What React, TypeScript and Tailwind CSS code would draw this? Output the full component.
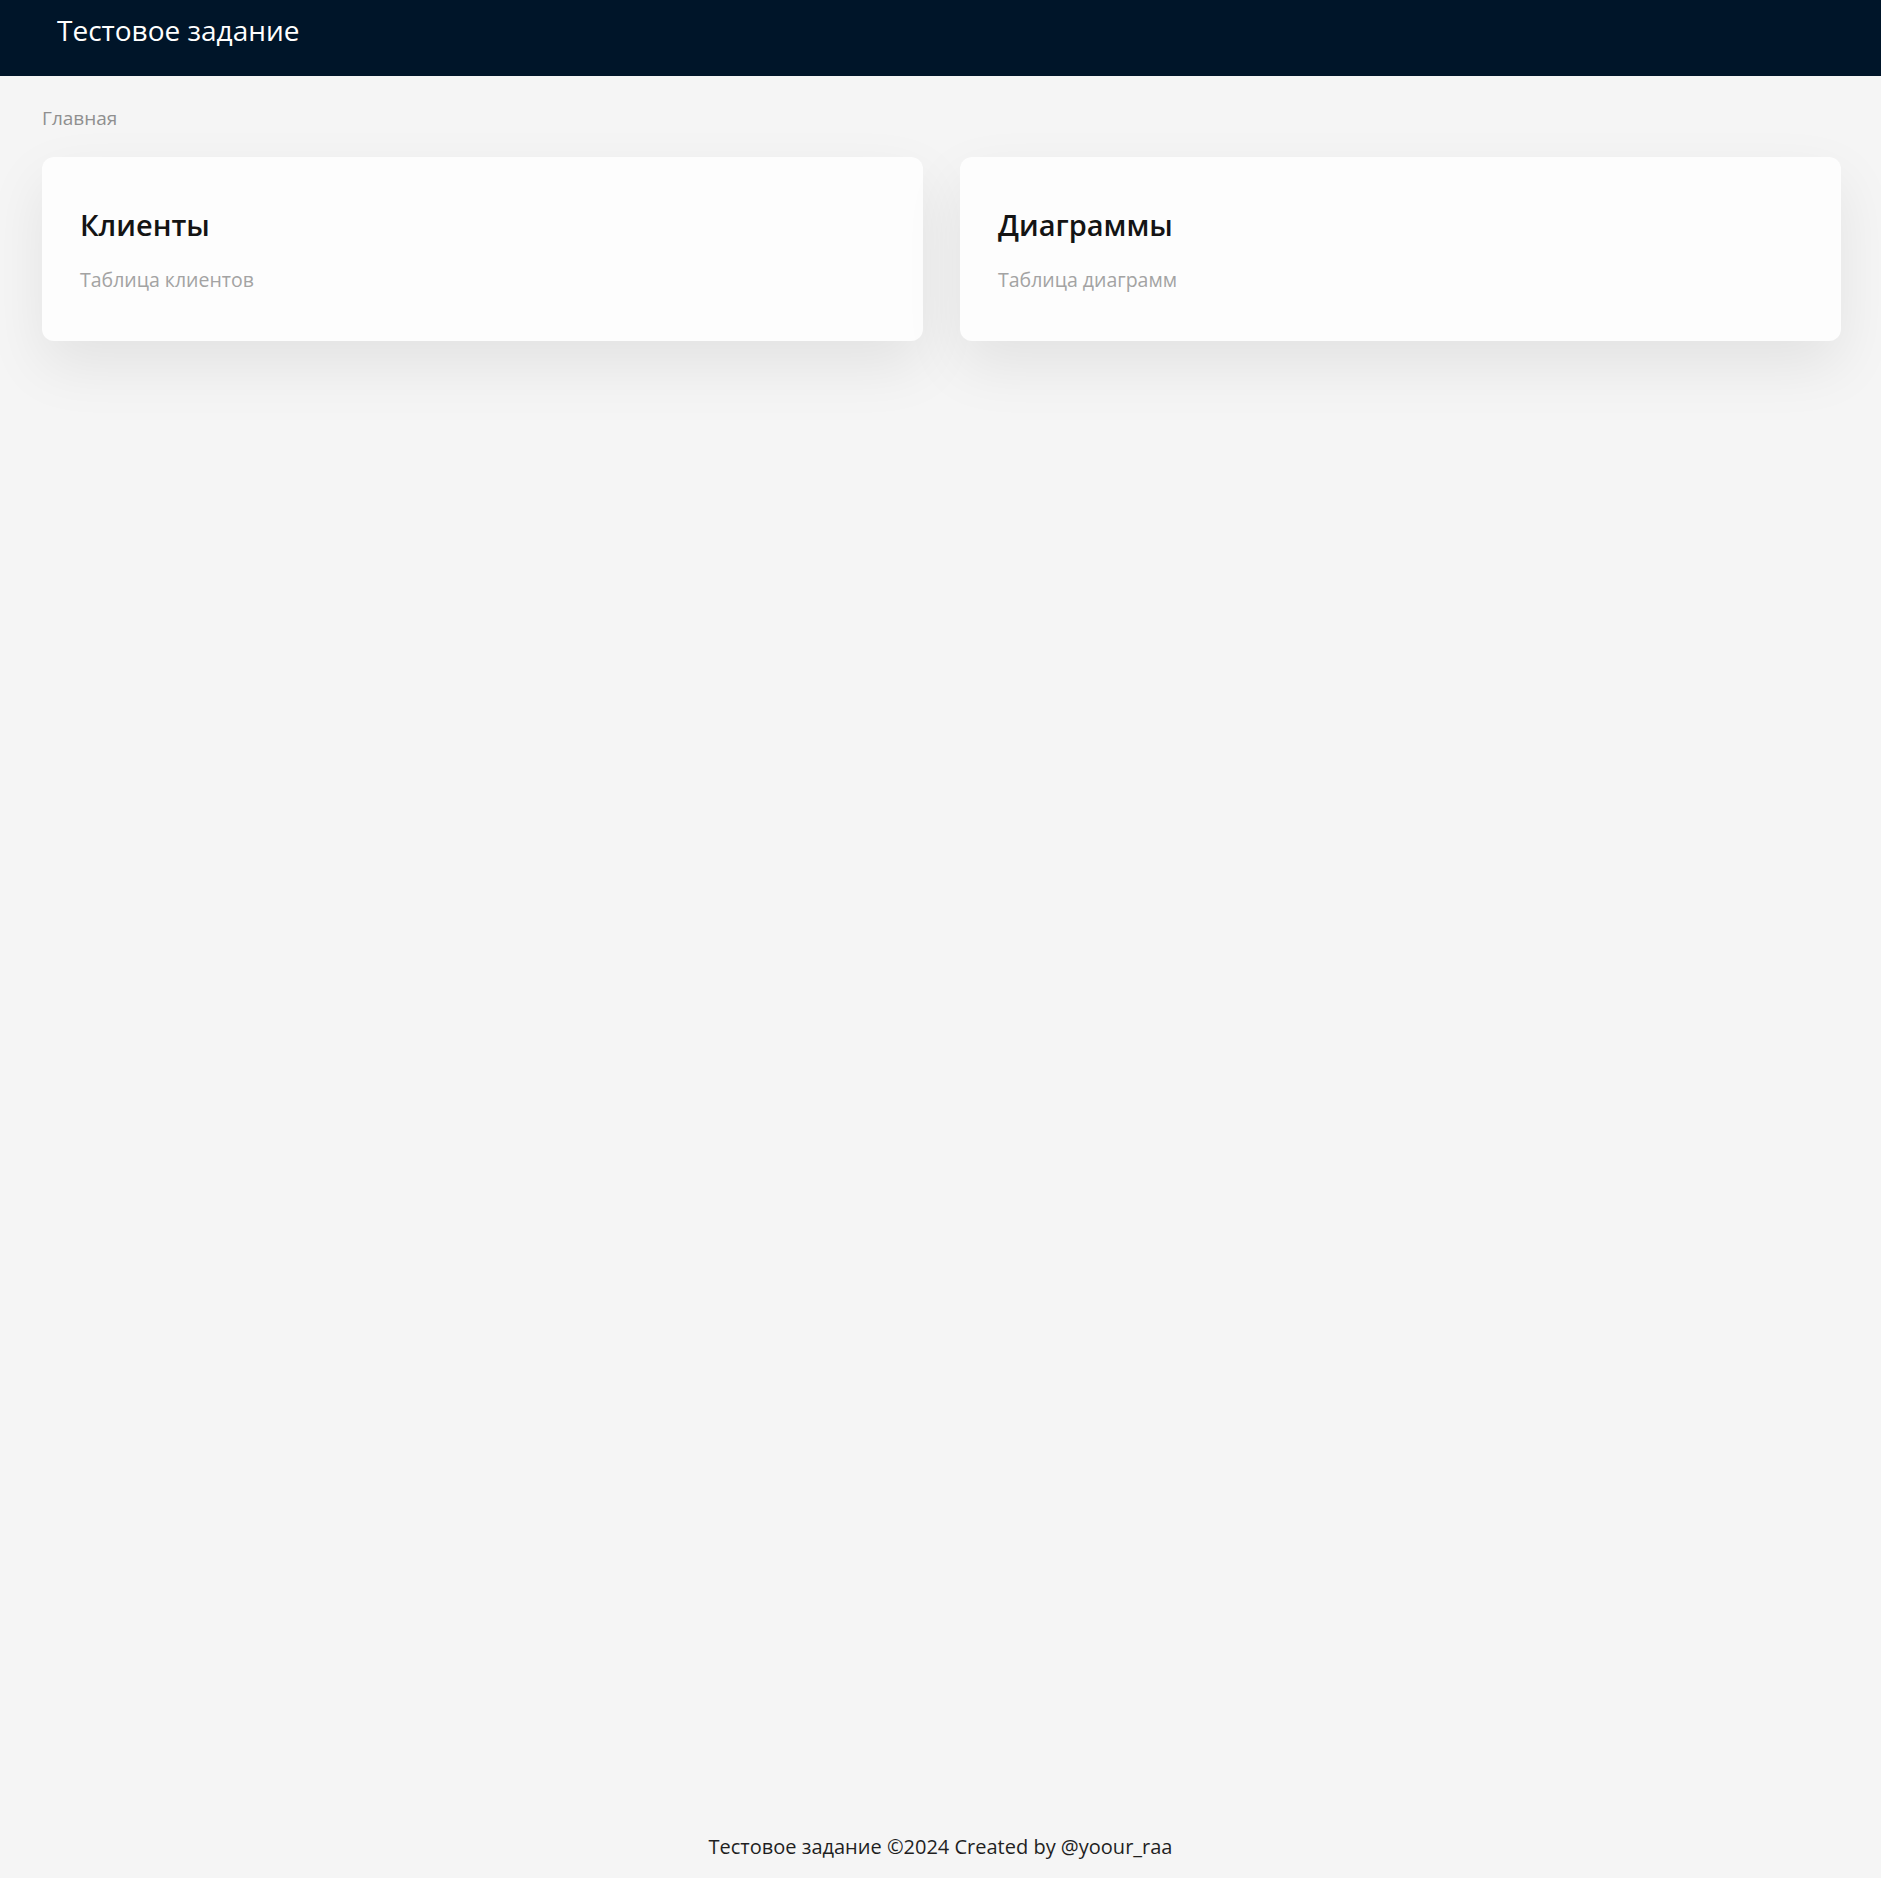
import React from "react";

function Card({ title, desc }: { title: string; desc: string }) {
  return (
    <div className="bg-[#fdfdfd] rounded-[12px] h-[184px] pl-[38px] pr-[38px] pt-[48px] shadow-[0_24px_60px_rgba(0,0,0,0.08)]">
      <div className="text-[29px] leading-[40px] font-semibold text-[#141414]">{title}</div>
      <div className="mt-[22px] text-[19.5px] leading-[26px] text-[#a3a3a3]">{desc}</div>
    </div>
  );
}

export default function App() {
  return (
    <div className="min-h-[1878px] flex flex-col bg-[#f5f5f5] font-['Open_Sans',sans-serif]">
      <header className="h-[76px] bg-[#001529] flex items-start pl-[57px] pt-[10px]">
        <div className="text-white text-[28px] leading-[40px]">Тестовое задание</div>
      </header>
      <main className="flex-1 pl-[42px] pr-[40px]">
        <div className="pt-[29px] h-[81px] text-[19px] leading-[26px] text-[#8f8f8f]">Главная</div>
        <div className="grid grid-cols-2 gap-[37px]">
          <Card title="Клиенты" desc="Таблица клиентов" />
          <Card title="Диаграммы" desc="Таблица диаграмм" />
        </div>
      </main>
      <footer className="h-[60px] flex items-start justify-center pt-[15px] text-[20px] leading-[28px] text-[#1f1f1f]">
        Тестовое задание ©2024 Created by @yoour_raa
      </footer>
    </div>
  );
}
